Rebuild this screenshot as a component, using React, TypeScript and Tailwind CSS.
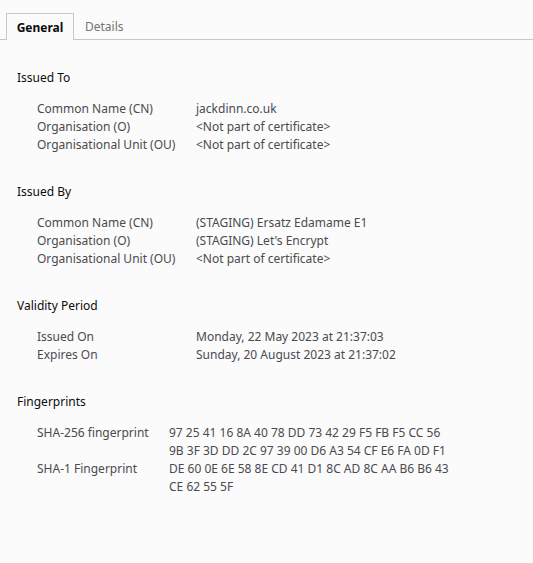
const sections: { title: string; labelWidth: string; rows: [string, string[]][] }[] = [
  {
    title: "Issued To",
    labelWidth: "w-[159px]",
    rows: [
      ["Common Name (CN)", ["jackdinn.co.uk"]],
      ["Organisation (O)", ["<Not part of certificate>"]],
      ["Organisational Unit (OU)", ["<Not part of certificate>"]],
    ],
  },
  {
    title: "Issued By",
    labelWidth: "w-[159px]",
    rows: [
      ["Common Name (CN)", ["(STAGING) Ersatz Edamame E1"]],
      ["Organisation (O)", ["(STAGING) Let's Encrypt"]],
      ["Organisational Unit (OU)", ["<Not part of certificate>"]],
    ],
  },
  {
    title: "Validity Period",
    labelWidth: "w-[159px]",
    rows: [
      ["Issued On", ["Monday, 22 May 2023 at 21:37:03"]],
      ["Expires On", ["Sunday, 20 August 2023 at 21:37:02"]],
    ],
  },
  {
    title: "Fingerprints",
    labelWidth: "w-[132px]",
    rows: [
      [
        "SHA-256 fingerprint",
        [
          "97 25 41 16 8A 40 78 DD 73 42 29 F5 FB F5 CC 56",
          "9B 3F 3D DD 2C 97 39 00 D6 A3 54 CF E6 FA 0D F1",
        ],
      ],
      [
        "SHA-1 Fingerprint",
        ["DE 60 0E 6E 58 8E CD 41 D1 8C AD 8C AA B6 B6 43", "CE 62 55 5F"],
      ],
    ],
  },
];

export default function App() {
  return (
    <div className="h-[563px] w-[533px] overflow-hidden bg-[#fbfbfb] font-['Noto_Sans',sans-serif] text-[12px] leading-[18px]">
      <div className="flex h-10 items-end border-b border-[#c8c8c8] pl-1.5">
        <div className="-mb-px flex h-[27px] w-[68px] items-center justify-center border border-b-0 border-[#c8c8c8] bg-[#fbfbfb] pt-px font-bold text-[#0c0c0d]">
          General
        </div>
        <div className="flex h-[26px] items-center px-[11px] pt-px text-[#737373]">Details</div>
      </div>

      <div className="px-[17px] pt-[29px]">
        {sections.map((s) => (
          <section key={s.title} className="mb-[29px]">
            <h2 className="mb-[13px] text-[#0c0c0d]">{s.title}</h2>
            <div className="pl-5">
              {s.rows.map(([label, values]) => (
                <div key={label} className="flex text-[#4a4a4f]">
                  <div className={`${s.labelWidth} shrink-0`}>{label}</div>
                  <div>
                    {values.map((v) => (
                      <div key={v}>{v}</div>
                    ))}
                  </div>
                </div>
              ))}
            </div>
          </section>
        ))}
      </div>
    </div>
  );
}
